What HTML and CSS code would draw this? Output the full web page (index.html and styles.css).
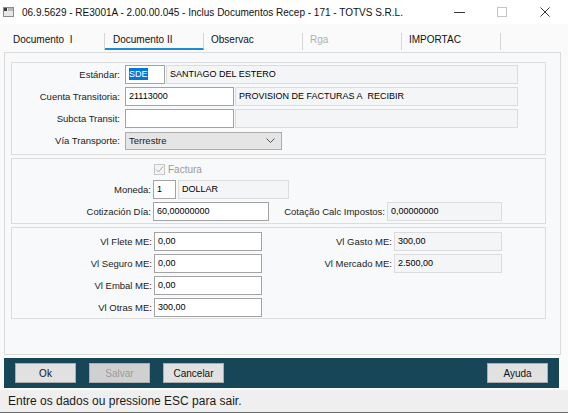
FILE: index.html
```html
<!DOCTYPE html>
<html>
<head>
    <title>Inclus Documentos Recep</title>
    <link rel="stylesheet" href="styles.css">
</head>
<body>
    <div class="window">
        <div class="titlebar">
            <svg class="app-icon" width="11" height="10" viewBox="0 0 11 10">
                <rect x="0.5" y="0.5" width="10" height="9" fill="#e8e8e8" stroke="#8c8c8c"/>
                <rect x="1" y="1" width="3" height="3" fill="#3a3a3a"/>
                <rect x="5" y="1" width="5" height="3" fill="#b8b8b8"/>
            </svg>
            <span class="title">06.9.5629 - RE3001A - 2.00.00.045 - Inclus Documentos Recep - 171 - TOTVS S.R.L.</span>
            <div class="controls">
                <svg class="ctl" width="11" height="10" viewBox="0 0 11 10"><path d="M0 5.5h11" stroke="#333" stroke-width="1"/></svg>
                <svg class="ctl" width="10" height="10" viewBox="0 0 10 10"><rect x="0.5" y="0.5" width="9" height="9" fill="none" stroke="#c4c4c4"/></svg>
                <svg class="ctl" width="10" height="10" viewBox="0 0 10 10"><path d="M0.5 0.5l9 9M9.5 0.5l-9 9" stroke="#333" stroke-width="1"/></svg>
            </div>
        </div>

        <div class="tabs">
            <div class="tab">Documento&nbsp; I</div>
            <div class="tab active">Documento II</div>
            <div class="tab">Observac</div>
            <div class="tab disabled">Rga</div>
            <div class="tab">IMPORTAC</div>
        </div>

        <div class="panel">
            <div class="group g1">
                <div class="row">
                    <span class="label">Estándar:</span>
                    <span class="field edit w-sde"><span class="selected">SDE</span></span>
                    <span class="field ro w-est">SANTIAGO DEL ESTERO</span>
                </div>
                <div class="row">
                    <span class="label">Cuenta Transitoria:</span>
                    <span class="field edit w-cta">21113000</span>
                    <span class="field ro w-desc">PROVISION DE FACTURAS A&nbsp; RECIBIR</span>
                </div>
                <div class="row">
                    <span class="label">Subcta Transit:</span>
                    <span class="field edit w-cta"></span>
                    <span class="field ro w-desc"></span>
                </div>
                <div class="row">
                    <span class="label">Vía Transporte:</span>
                    <span class="combo">
                        <span>Terrestre</span>
                        <svg width="9" height="5" viewBox="0 0 9 5"><path d="M0.5 0.5l4 4 4-4" fill="none" stroke="#555" stroke-width="1"/></svg>
                    </span>
                </div>
            </div>

            <div class="group g2">
                <div class="check-row">
                    <svg width="11" height="11" viewBox="0 0 11 11">
                        <rect x="0.5" y="0.5" width="10" height="10" fill="#f4f4f4" stroke="#c6c6c6"/>
                        <path d="M2 5.5l2.5 2.5 4.5-5.5" fill="none" stroke="#a8a8a8" stroke-width="1"/>
                    </svg>
                    <span class="check-label">Factura</span>
                </div>
                <div class="row">
                    <span class="label">Moneda:</span>
                    <span class="field edit w-mon">1</span>
                    <span class="field ro w-dollar">DOLLAR</span>
                </div>
                <div class="row">
                    <span class="label">Cotización Día:</span>
                    <span class="field edit w-cot">60,00000000</span>
                    <span class="label label-mid">Cotação Calc Impostos:</span>
                    <span class="field ro w-imp">0,00000000</span>
                </div>
            </div>

            <div class="group g3">
                <span class="label">Vl Flete ME:</span>
                <span class="field edit">0,00</span>
                <span class="label">Vl Gasto ME:</span>
                <span class="field ro">300,00</span>

                <span class="label">Vl Seguro ME:</span>
                <span class="field edit">0,00</span>
                <span class="label">Vl Mercado ME:</span>
                <span class="field ro">2.500,00</span>

                <span class="label">Vl Embal ME:</span>
                <span class="field edit">0,00</span>
                <span></span>
                <span></span>

                <span class="label">Vl Otras ME:</span>
                <span class="field edit">300,00</span>
            </div>
        </div>

        <div class="buttonbar">
            <button class="btn">Ok</button>
            <button class="btn" disabled>Salvar</button>
            <button class="btn">Cancelar</button>
            <button class="btn btn-help">Ayuda</button>
        </div>

        <div class="statusbar">Entre os dados ou pressione ESC para sair.</div>
    </div>
</body>
</html>
```

FILE: styles.css
```css
* {
    box-sizing: border-box;
}

body {
    margin: 0;
    background: #f0f0f0;
    font-family: "Liberation Sans", Arial, sans-serif;
    color: #1a1a1a;
}

.window {
    width: 568px;
    height: 413px;
    display: flex;
    flex-direction: column;
    background: #fafafa;
    overflow: hidden;
}

/* title bar */
.titlebar {
    height: 24px;
    background: #fff;
    display: flex;
    align-items: center;
    padding-left: 3px;
}

.app-icon {
    margin-right: 8px;
}

.title {
    font-size: 10px;
    color: #111;
}

.controls {
    margin-left: auto;
    display: flex;
    align-items: center;
}

.ctl:nth-child(1) {
    margin-right: 32px;
}

.ctl:nth-child(2) {
    margin-right: 33px;
}

.ctl:nth-child(3) {
    margin-right: 18px;
}

/* tabs */
.tabs {
    height: 28px;
    display: flex;
    padding-left: 6px;
    background: #fafafa;
}

.tab {
    width: 99px;
    height: 17px;
    margin-top: 9px;
    padding-left: 7px;
    border-right: 1px solid #d6d6d6;
    font-size: 10px;
    line-height: 14px;
    color: #111;
}

.tab.active {
    padding-left: 8px;
    border-bottom: 2px solid #1f8ad6;
}

.tab.disabled {
    color: #b0b0b0;
}

/* main panel */
.panel {
    height: 303px;
    margin: 0 7px 0 4px;
    padding: 9px 14px 0 6px;
    background: #f8f9fa;
    border: 1px solid #dadada;
}

.group {
    border: 1px solid #dcdcdc;
    background: #f8f9fa;
    margin-bottom: 3px;
    font-size: 9.5px;
}

.row {
    display: flex;
    align-items: center;
    height: 19px;
}

.label {
    text-align: right;
    color: #222;
    white-space: nowrap;
}

.field {
    height: 19px;
    line-height: 17px;
    padding-left: 3px;
    white-space: nowrap;
    overflow: hidden;
    font-size: 9px;
    color: #000;
}

.field.edit {
    background: #fff;
    border: 1px solid #a3a3a3;
}

.field.ro {
    background: #f4f5f6;
    border: 1px solid #dcdcdc;
}

.selected {
    background: #0078d7;
    color: #fff;
    padding: 1px 0;
}

.g1 {
    height: 93px;
    padding-top: 2px;
    display: flex;
    flex-direction: column;
    gap: 3px;
}

.g1 .label {
    width: 113px;
    padding-right: 5px;
}

.w-sde { width: 40px; }
.w-est { width: 352px; margin-left: 1px; }
.w-cta { width: 109px; }
.w-desc { width: 283px; margin-left: 1px; }

.combo {
    width: 157px;
    height: 18px;
    display: flex;
    align-items: center;
    justify-content: space-between;
    padding: 0 6px 0 3px;
    background: #e5e5e5;
    border: 1px solid #adadad;
}

.g2 {
    height: 66px;
    padding-top: 3px;
}

.check-row {
    height: 14px;
    margin-bottom: 4px;
    display: flex;
    align-items: center;
    padding-left: 142px;
}

.check-label {
    margin-left: 3px;
    color: #9a9a9a;
    font-size: 10px;
}

.g2 .row + .row {
    margin-top: 3px;
}

.g2 .label {
    width: 141px;
    padding-right: 2px;
}

.g2 .label-mid {
    width: 118px;
    padding-right: 2px;
}

.w-mon { width: 23px; }
.w-dollar { width: 111px; margin-left: 2px; }
.w-cot { width: 116px; }
.w-imp { width: 115px; }

.g3 {
    height: 92px;
    padding-top: 4px;
    display: grid;
    grid-template-columns: 142px 108px 132px 108px;
    grid-auto-rows: 19px;
    row-gap: 3px;
    align-items: center;
}

.g3 .label {
    padding-right: 2px;
}

/* button bar */
.buttonbar {
    height: 30px;
    margin: 3px 9px 0 4px;
    padding: 0 11px;
    background: #184659;
    display: flex;
    align-items: center;
}

.btn {
    width: 61px;
    height: 20px;
    margin-right: 13px;
    padding: 0;
    background: #e1e1e1;
    border: 1px solid #adadad;
    font-family: "Liberation Sans", Arial, sans-serif;
    font-size: 10px;
    color: #111;
}

.btn[disabled] {
    background: #d0d0d0;
    color: #9c9c9c;
}

.btn-help {
    margin-left: auto;
    margin-right: 0;
}

/* status bar */
.statusbar {
    flex: 1;
    margin-top: 2px;
    padding-left: 8px;
    background: #efefef;
    border-bottom: 1px solid #6a6a6a;
    font-size: 12px;
    line-height: 22px;
    color: #1a1a1a;
}
```
